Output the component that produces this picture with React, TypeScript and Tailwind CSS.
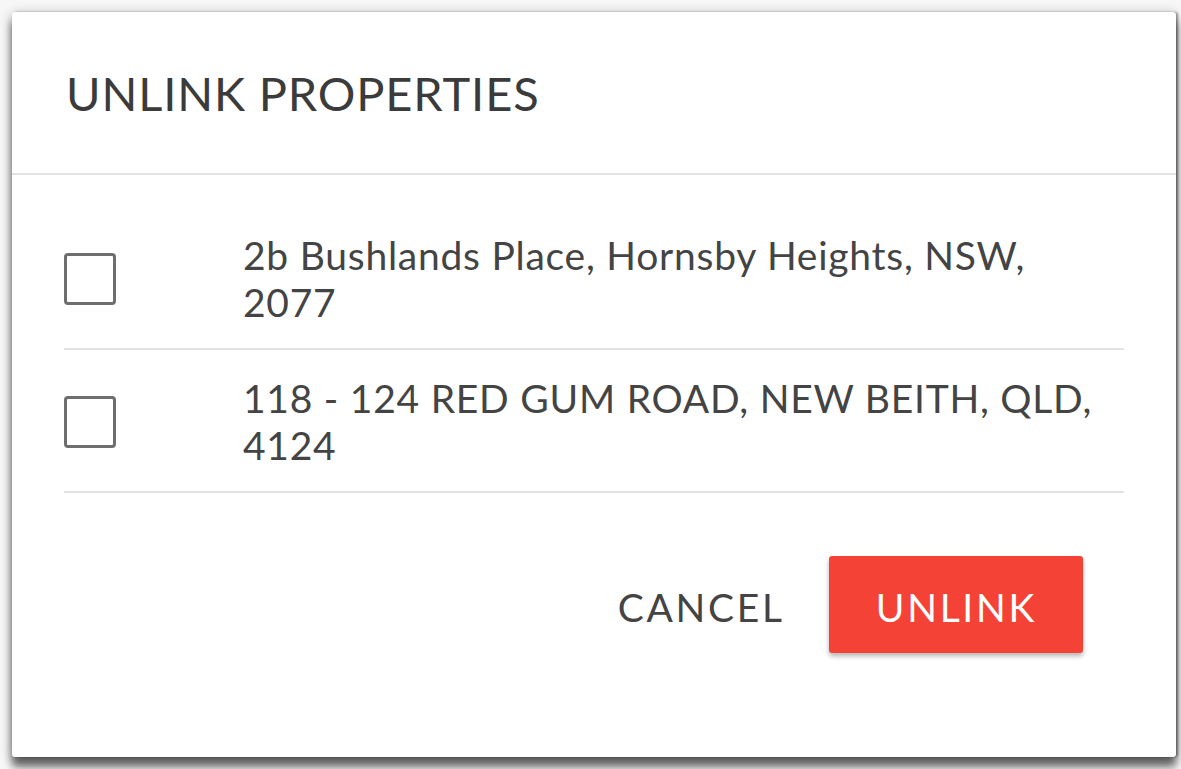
import React from "react";

const rows = [
  "2b Bushlands Place, Hornsby Heights, NSW, 2077",
  "118 - 124 RED GUM ROAD, NEW BEITH, QLD, 4124",
];

export default function App() {
  return (
    <div
      className="w-[1181px] h-[769px] overflow-hidden bg-[#f7f7f7] pl-[12px] pt-[12px]"
      style={{ fontFamily: "Lato, 'Open Sans', sans-serif" }}
    >
      <div className="w-[1164px] h-[745px] bg-white rounded-[3px] shadow-[0_10px_8px_rgba(0,0,0,0.55),0_2px_12px_rgba(0,0,0,0.3),2px_0_2px_rgba(0,0,0,0.35)] flex flex-col">
        <div className="h-[163px] border-b-2 border-[#e2e2e2] flex items-center pl-[54px]">
          <h1 className="text-[47px] leading-none font-normal text-[#3b3b3b] tracking-[0.85px] pt-[2px]">
            UNLINK PROPERTIES
          </h1>
        </div>
        <div className="px-[52px] pt-[32px]">
          {rows.map((r) => (
            <div
              key={r}
              className="h-[143px] border-b-2 border-[#e2e2e2] flex items-center"
            >
              <div className="w-[179px] shrink-0 flex items-center pt-[3px]">
                <div className="w-[52px] h-[52px] border-[3px] border-[#6e6e6e] rounded-[4px]" />
              </div>
              <div className="w-[860px] text-[39px] leading-[47px] text-[#444] tracking-[0.75px] pt-[2px]">
                {r}
              </div>
            </div>
          ))}
        </div>
        <div className="flex items-center justify-end pr-[93px] pt-[63px]">
          <button className="text-[39px] leading-none text-[#444] tracking-[2.7px] mr-[44px] pt-[6px]">
            CANCEL
          </button>
          <button className="h-[97px] pl-[47px] pr-[46px] bg-[#f44336] text-white text-[39px] leading-none tracking-[2.7px] rounded-[3px] shadow-[0_3px_5px_rgba(0,0,0,0.3)] pt-[6px]">
            UNLINK
          </button>
        </div>
      </div>
    </div>
  );
}
